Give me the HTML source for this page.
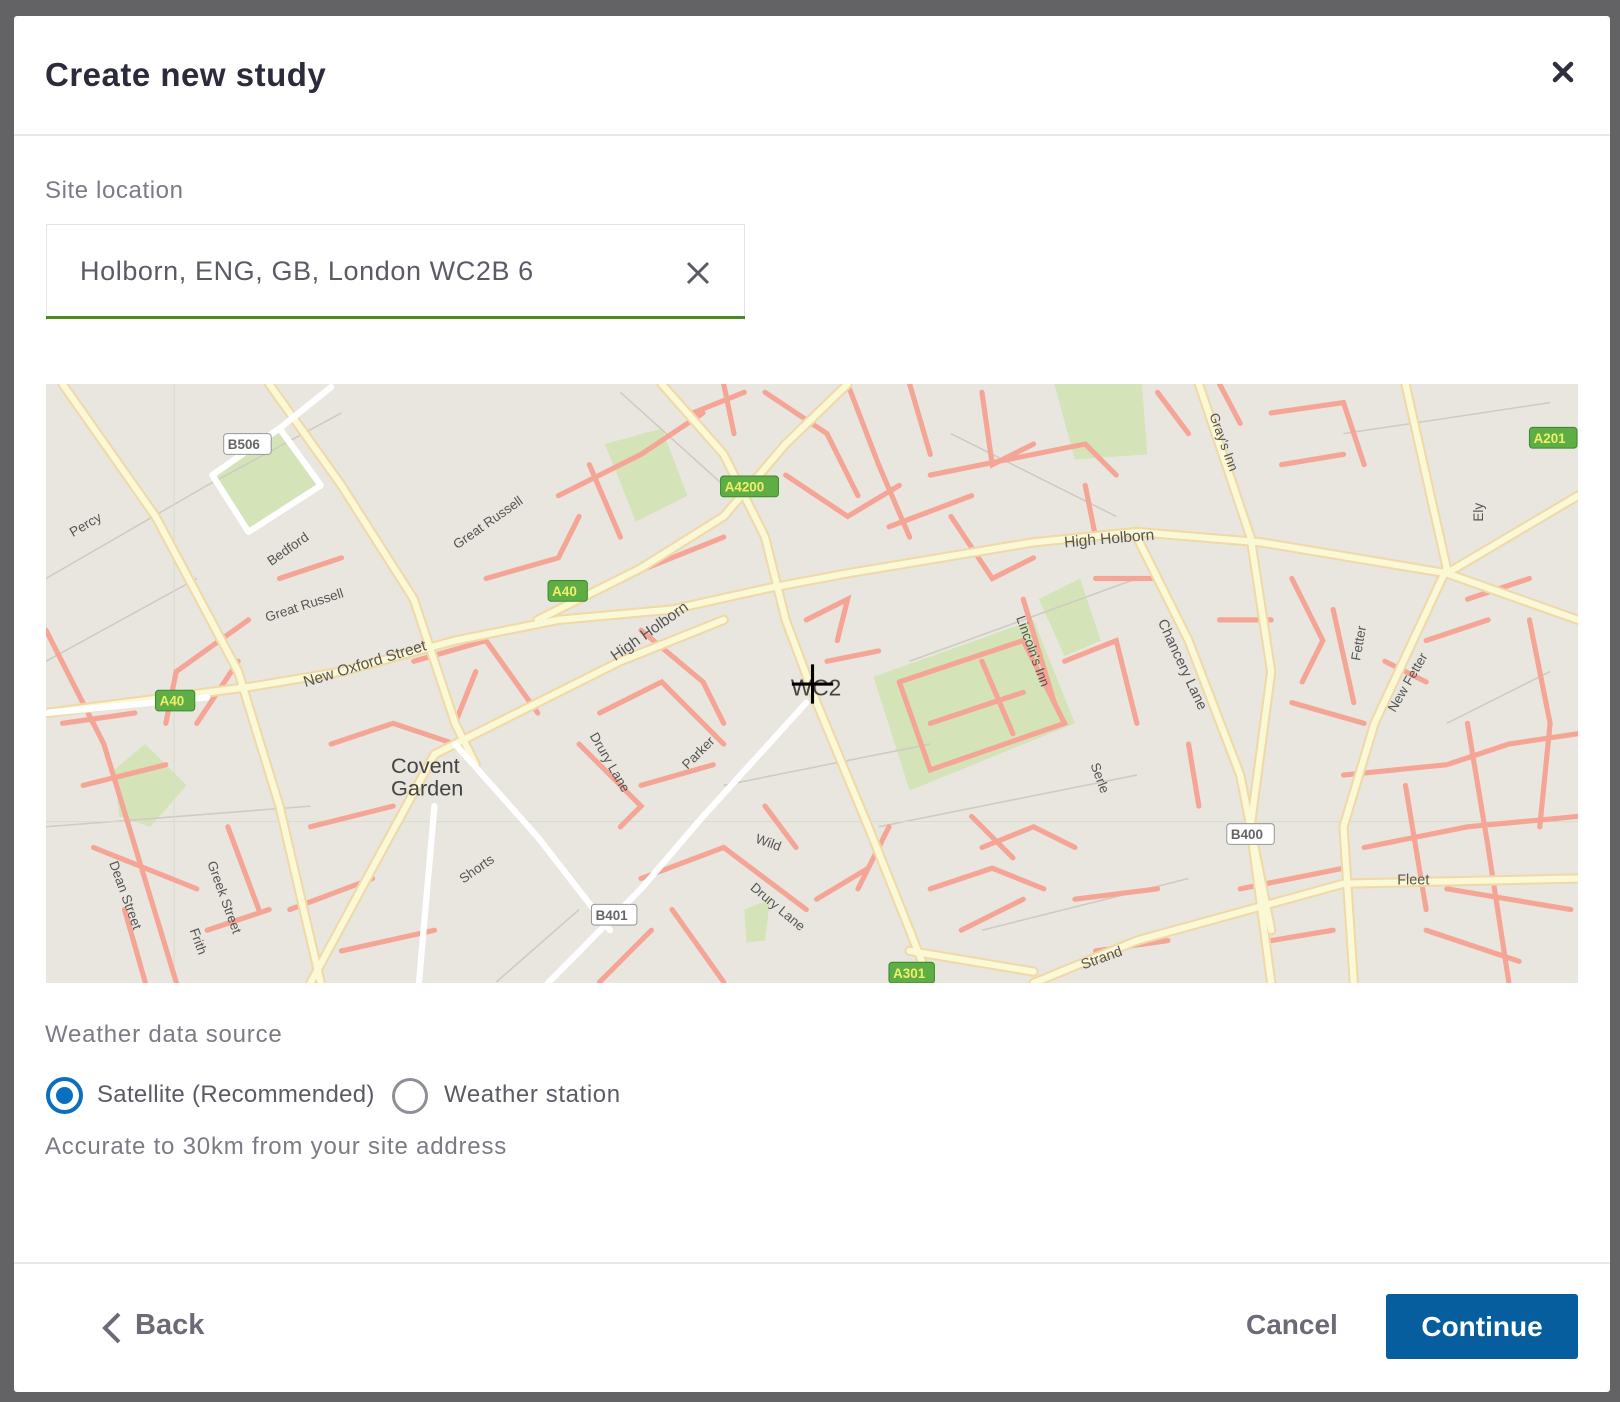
<!DOCTYPE html>
<html><head><meta charset="utf-8"><style>
*{margin:0;padding:0;box-sizing:border-box}
body{width:1620px;height:1402px;background:#636366;position:relative;overflow:hidden;font-family:"Liberation Sans",sans-serif}
.modal{position:absolute;left:14px;top:16px;width:1596px;height:1376px;background:#fff;border-radius:3px}
.a{position:absolute;white-space:nowrap}
</style></head><body>
<div class="modal"></div>
<div class="a" style="left:45px;top:56px;font-size:33px;font-weight:bold;color:#2b2b3b;letter-spacing:0.5px">Create new study</div>
<svg class="a" style="left:1552px;top:61px" width="22" height="22" viewBox="0 0 22 22"><path d="M3 3L19 19M19 3L3 19" stroke="#2f2f40" stroke-width="4.5" stroke-linecap="round"/></svg>
<div class="a" style="left:14px;top:134px;width:1596px;height:2px;background:#e8e8ec"></div>
<div class="a" style="left:45px;top:177px;font-size:24px;color:#7b7b86;letter-spacing:0.6px">Site location</div>
<div class="a" style="left:46px;top:224px;width:699px;height:96px;border:1px solid #e4e4e8;border-bottom:none"></div>
<div class="a" style="left:46px;top:316px;width:699px;height:3px;background:#4a8a23"></div>
<div class="a" style="left:80px;top:256px;font-size:27px;color:#5b5b68;letter-spacing:0.6px">Holborn, ENG, GB, London WC2B 6</div>
<svg class="a" style="left:686px;top:261px" width="24" height="24"><path d="M2 2L22 22M22 2L2 22" stroke="#5b5b68" stroke-width="3"/></svg>

<svg class="a" style="left:46px;top:384px" width="1532" height="599" viewBox="44 372 1483 579" preserveAspectRatio="none">
<rect x="44" y="372" width="1483" height="579" fill="#e9e6e0"/>
<g fill="#d4e4b8">
<polygon points="205,460 270,415 310,470 240,515"/>
<polygon points="585,430 640,415 665,480 615,505"/>
<polygon points="1020,372 1105,372 1110,440 1040,445"/>
<polygon points="1005,580 1045,560 1065,620 1030,635"/>
<polygon points="845,655 1000,600 1040,700 880,765"/>
<polygon points="110,745 140,720 180,760 145,800 115,790"/>
<polygon points="720,880 745,870 740,910 722,912"/>
</g>
<g fill="none" stroke="#cfcac2" stroke-width="1.5">
<path d="M44 560L200 470L330 400M44 640L190 560M600 380L700 470M880 640L1100 560M850 800L1100 750M1300 420L1500 390M950 900L1150 850M700 760L900 720M44 800L300 780M480 950L560 880M920 420L1080 500M1400 700L1500 650"/>
<path d="M168 372L168 951M44 795L1527 795" stroke="#d5dccb" stroke-width="1"/>
</g>
<g fill="none" stroke="#f5a596" stroke-width="5" stroke-linecap="round">
<path d="M44 610L100 720L170 950M60 700L130 690M80 760L160 740M90 820L190 860M190 700L230 640M270 560L330 540M240 600L170 650L160 700M320 720L380 700L440 720M300 800L380 780M280 880L360 850M330 920L420 900"/>
<path d="M400 640L470 620L520 690M460 650L440 700M470 560L540 540L560 500M540 480L620 440L680 400M570 450L600 520M600 560L700 520M620 610L680 660L700 700M580 690L640 660L700 720M620 760L690 740M560 720L620 780L600 800M620 850L700 820L780 880M650 880L700 950M630 900L580 950M740 780L770 820M670 400L720 380"/>
<path d="M700 372L710 420M740 380L800 420L830 480M760 460L820 500L870 470M780 600L820 580L810 620M800 640L850 630M820 372L850 450L880 520M880 372L900 440M950 380L960 450L1000 430M900 460L1050 430L1080 460M920 500L960 560L1000 540M1050 470L1060 520M860 510L940 480"/>
<path d="M870 660L990 620L1030 700L900 745L870 660M900 700L960 680L990 670M950 640L980 710"/>
<path d="M990 580L1020 680M1030 640L1080 620L1100 700M1060 560L1120 560M1120 380L1150 420M1180 372L1200 410M1230 400L1300 390L1320 450M1240 450L1300 440M1250 560L1280 620L1260 660M1180 600L1230 600M1290 590L1310 680M1250 680L1320 700M1340 640L1380 660M1380 620L1440 600M1420 580L1480 560"/>
<path d="M1300 750L1400 740L1460 720L1527 710M1320 820L1420 800L1527 790M1360 760L1380 880M1420 700L1440 820L1460 950M1480 600L1500 700L1490 800M1400 860L1520 880M1380 900L1470 930M1200 860L1300 840M1230 910L1290 900M1150 720L1160 780"/>
<path d="M900 860L960 840L1010 860M930 900L990 870M950 820L1000 800L1040 820M940 790L980 830M1040 870L1120 860M1060 920L1130 910M860 800L830 860M790 870L840 840"/>
<path d="M200 900L260 880M120 880L140 950M220 800L250 880"/>
</g>
<g fill="none" stroke-linecap="round" stroke-linejoin="round">
<g stroke="#efd9a8" stroke-width="10">
<path d="M44 690L240 665L330 650L440 620L540 600L650 590L740 570L820 555L1000 525L1100 515L1220 525L1400 555L1527 600"/>
<path d="M640 372L700 440L740 520L760 600L790 680L840 800L880 900L900 951"/>
<path d="M260 372L330 470L400 580L440 700L460 740"/>
<path d="M60 372L150 500L230 650L270 780L310 951"/>
<path d="M300 951L360 840L420 730L500 690L600 640L700 600"/>
<path d="M820 372L760 430L700 500L620 550L520 600"/>
<path d="M1160 372L1210 520L1230 650L1210 800L1230 951"/>
<path d="M1360 372L1400 550L1330 700L1300 800L1310 951"/>
<path d="M1527 480L1400 555M1100 520L1150 620L1200 750L1230 900"/>
<path d="M1000 951L1100 910L1300 855L1527 850M880 920L1000 940"/>
</g>
<g stroke="#fbf8d6" stroke-width="6">
<path d="M44 690L240 665L330 650L440 620L540 600L650 590L740 570L820 555L1000 525L1100 515L1220 525L1400 555L1527 600"/>
<path d="M640 372L700 440L740 520L760 600L790 680L840 800L880 900L900 951"/>
<path d="M260 372L330 470L400 580L440 700L460 740"/>
<path d="M60 372L150 500L230 650L270 780L310 951"/>
<path d="M300 951L360 840L420 730L500 690L600 640L700 600"/>
<path d="M820 372L760 430L700 500L620 550L520 600"/>
<path d="M1160 372L1210 520L1230 650L1210 800L1230 951"/>
<path d="M1360 372L1400 550L1330 700L1300 800L1310 951"/>
<path d="M1527 480L1400 555M1100 520L1150 620L1200 750L1230 900"/>
<path d="M1000 951L1100 910L1300 855L1527 850M880 920L1000 940"/>
</g>
<g stroke="#fff" stroke-width="6">
<path d="M205 460L270 415L310 470L240 515Z"/>
<path d="M270 415L320 375"/>
<path d="M780 680L680 790L620 860L530 951"/>
<path d="M440 720L520 810L590 900"/>
<path d="M420 780L405 951"/>
<path d="M44 690L200 675"/>
</g>
</g>
<g font-family="Liberation Sans,sans-serif" font-size="13" fill="#555">
<text x="70" y="520" transform="rotate(-30 70 520)">Percy</text>
<text x="262" y="548" transform="rotate(-35 262 548)">Bedford</text>
<text x="258" y="602" transform="rotate(-18 258 602)">Great Russell</text>
<text x="442" y="532" transform="rotate(-35 442 532)">Great Russell</text>
<text x="295" y="665" transform="rotate(-17 295 665)" font-size="15">New Oxford Street</text>
<text x="595" y="640" transform="rotate(-35 595 640)" font-size="15">High Holborn</text>
<text x="1030" y="530" transform="rotate(-5 1030 530)" font-size="15">High Holborn</text>
<text x="378" y="748" font-size="21" fill="#444">Covent</text>
<text x="378" y="770" font-size="21" fill="#444">Garden</text>
<text x="765" y="673" font-size="22" fill="#444">WC2</text>
<text x="570" y="712" transform="rotate(60 570 712)">Drury Lane</text>
<text x="725" y="860" transform="rotate(40 725 860)">Drury Lane</text>
<text x="665" y="745" transform="rotate(-45 665 745)">Parker</text>
<text x="730" y="815" transform="rotate(20 730 815)">Wild</text>
<text x="448" y="855" transform="rotate(-35 448 855)">Shorts</text>
<text x="105" y="835" transform="rotate(70 105 835)">Dean Street</text>
<text x="200" y="835" transform="rotate(70 200 835)">Greek Street</text>
<text x="183" y="900" transform="rotate(70 183 900)">Frith</text>
<text x="1120" y="602" transform="rotate(65 1120 602)" font-size="14">Chancery Lane</text>
<text x="983" y="598" transform="rotate(70 983 598)">Lincoln's Inn</text>
<text x="1055" y="740" transform="rotate(70 1055 740)">Serle</text>
<text x="1170" y="402" transform="rotate(70 1170 402)">Gray's Inn</text>
<text x="1316" y="640" transform="rotate(-80 1316 640)">Fetter</text>
<text x="1350" y="690" transform="rotate(-60 1350 690)">New Fetter</text>
<text x="1435" y="505" transform="rotate(-90 1435 505)">Ely</text>
<text x="1352" y="856" font-size="14">Fleet</text>
<text x="1048" y="938" transform="rotate(-20 1048 938)" font-size="14">Strand</text>
</g>
<g font-family="Liberation Sans,sans-serif" font-size="13" font-weight="bold">
<rect x="216" y="420" width="46" height="20" rx="3" fill="#fff" stroke="#999"/><text x="220" y="435" fill="#666">B506</text>
<rect x="697" y="461" width="56" height="20" rx="3" fill="#5fae45" stroke="#3b8a2a"/><text x="701" y="476" fill="#f2ee6a">A4200</text>
<rect x="530" y="562" width="38" height="20" rx="3" fill="#5fae45" stroke="#3b8a2a"/><text x="534" y="577" fill="#f2ee6a">A40</text>
<rect x="150" y="668" width="38" height="20" rx="3" fill="#5fae45" stroke="#3b8a2a"/><text x="154" y="683" fill="#f2ee6a">A40</text>
<rect x="1480" y="414" width="46" height="20" rx="3" fill="#5fae45" stroke="#3b8a2a"/><text x="1484" y="429" fill="#f2ee6a">A201</text>
<rect x="860" y="931" width="44" height="20" rx="3" fill="#5fae45" stroke="#3b8a2a"/><text x="864" y="946" fill="#f2ee6a">A301</text>
<rect x="1187" y="797" width="46" height="20" rx="3" fill="#fff" stroke="#999"/><text x="1191" y="812" fill="#666">B400</text>
<rect x="572" y="875" width="44" height="20" rx="3" fill="#fff" stroke="#999"/><text x="576" y="890" fill="#666">B401</text>
</g>
<path d="M786 643V681M766 662H806" stroke="#000" stroke-width="3"/>
</svg>

<div class="a" style="left:45px;top:1021px;font-size:24px;color:#7b7b86;letter-spacing:0.8px">Weather data source</div>
<div class="a" style="left:46px;top:1077px;width:37px;height:37px;border:4px solid #0b6fbf;border-radius:50%"></div>
<div class="a" style="left:56px;top:1087px;width:17px;height:17px;background:#0b6fbf;border-radius:50%"></div>
<div class="a" style="left:97px;top:1081px;font-size:24px;color:#5b5b68;letter-spacing:0.3px">Satellite (Recommended)</div>
<div class="a" style="left:392px;top:1078px;width:36px;height:36px;border:3px solid #8e8e96;border-radius:50%"></div>
<div class="a" style="left:444px;top:1081px;font-size:24px;color:#5b5b68;letter-spacing:0.6px">Weather station</div>
<div class="a" style="left:45px;top:1133px;font-size:24px;color:#7b7b86;letter-spacing:0.8px">Accurate to 30km from your site address</div>

<div class="a" style="left:14px;top:1262px;width:1596px;height:2px;background:#e8e8ec"></div>
<svg class="a" style="left:100px;top:1311px" width="24" height="34"><path d="M19 3L5 17L19 31" fill="none" stroke="#6b6b78" stroke-width="4"/></svg>
<div class="a" style="left:135px;top:1309px;font-size:29px;font-weight:bold;color:#6b6b78">Back</div>
<div class="a" style="left:1246px;top:1309px;font-size:28px;font-weight:bold;color:#6b6b78">Cancel</div>
<div class="a" style="left:1386px;top:1294px;width:192px;height:65px;background:#065e9e;border-radius:3px;color:#fff;font-size:28px;font-weight:bold;text-align:center;line-height:65px">Continue</div>
</body></html>
